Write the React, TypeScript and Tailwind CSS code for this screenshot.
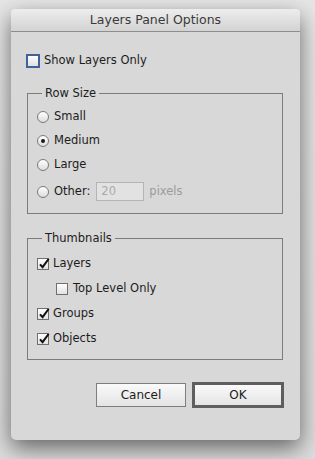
import React from 'react';

const font = { fontFamily: '"DejaVu Sans", "Liberation Sans", sans-serif' };

const Radio = ({ checked }: { checked?: boolean }) => (
    <span className="w-[12px] h-[12px] rounded-full border border-[#7a7a7a] bg-gradient-to-b from-[#ffffff] to-[#dcdcdc] flex items-center justify-center shrink-0">
        {checked && <span className="w-[4px] h-[4px] rounded-full bg-[#1a1a1a]" />}
    </span>
);

const Check = ({ checked }: { checked?: boolean }) => (
    <span className="w-[12px] h-[12px] border border-[#6f6f6f] bg-gradient-to-b from-[#ffffff] to-[#e2e2e2] flex items-center justify-center shrink-0 relative">
        {checked && (
            <svg width="12" height="13" viewBox="0 0 12 13" className="absolute -top-[2px] left-[0px]">
                <path d="M2 7.4 L4.6 10.2 L10.6 2" fill="none" stroke="#111" strokeWidth="2.1" />
            </svg>
        )}
    </span>
);

export default function App() {
    return (
        <div className="w-[315px] h-[459px] bg-gradient-to-b from-[#e6e6e6] to-[#dcdcdc] overflow-hidden pt-[9px] pl-[11px]" style={font}>
            <div className="w-[289px] h-[431px] bg-[#d8d8d8] rounded-t-[4px] rounded-b-[5px] shadow-[0_8px_22px_rgba(0,0,0,0.55)] flex flex-col text-[#1c1c1c]">
                {/* Title bar */}
                <div className="h-[23px] rounded-t-[4px] bg-gradient-to-b from-[#ededed] to-[#d3d3d3] border-b border-[#8e8e8e] flex items-center justify-center text-[12.5px] text-[#3a3a3a]">
                    Layers Panel Options
                </div>

                <div className="pl-[15px] pr-[17px] flex flex-col text-[11.5px]">
                    {/* Show Layers Only */}
                    <div className="mt-[21px] h-[16px] flex items-center gap-[4px]">
                        <span className="w-[14px] h-[14px] border-2 border-[#40619a] bg-gradient-to-b from-[#ffffff] to-[#e0e0e0] shrink-0" />
                        <span>Show Layers Only</span>
                    </div>

                    {/* Row Size */}
                    <fieldset className="mt-[17px] ml-[1px] border border-[#7c7c7c] pl-[9px] pt-[8px] pb-[12px] flex flex-col">
                        <legend className="ml-[5px] px-[3px] leading-[15px]">Row Size</legend>
                        <div className="h-[16px] flex items-center gap-[5px]">
                            <Radio />
                            <span>Small</span>
                        </div>
                        <div className="mt-[8px] h-[16px] flex items-center gap-[5px]">
                            <Radio checked />
                            <span>Medium</span>
                        </div>
                        <div className="mt-[8px] h-[16px] flex items-center gap-[5px]">
                            <Radio />
                            <span>Large</span>
                        </div>
                        <div className="mt-[9px] h-[19px] flex items-center gap-[5px]">
                            <Radio />
                            <span>Other:</span>
                            <span className="ml-[1px] w-[48px] h-[19px] border border-[#b4b4b4] bg-[#e2e2e2] text-[#ababab] pl-[4px] flex items-center">20</span>
                            <span className="text-[#9b9b9b]">pixels</span>
                        </div>
                    </fieldset>

                    {/* Thumbnails */}
                    <fieldset className="mt-[17px] ml-[1px] border border-[#7c7c7c] pl-[9px] pt-[10px] pb-[12px] flex flex-col">
                        <legend className="ml-[5px] px-[3px] leading-[15px]">Thumbnails</legend>
                        <div className="h-[16px] flex items-center gap-[4px]">
                            <Check checked />
                            <span>Layers</span>
                        </div>
                        <div className="mt-[9px] ml-[19px] h-[16px] flex items-center gap-[5px]">
                            <Check />
                            <span>Top Level Only</span>
                        </div>
                        <div className="mt-[9px] h-[16px] flex items-center gap-[4px]">
                            <Check checked />
                            <span>Groups</span>
                        </div>
                        <div className="mt-[9px] h-[16px] flex items-center gap-[4px]">
                            <Check checked />
                            <span>Objects</span>
                        </div>
                    </fieldset>

                    {/* Buttons */}
                    <div className="mt-[22px] flex items-center justify-end gap-[6px] mr-[-1px]">
                        <button className="w-[90px] h-[24px] border border-[#7e7e7e] bg-gradient-to-b from-[#fafafa] to-[#e4e4e4] text-[12px] text-[#1c1c1c]">
                            Cancel
                        </button>
                        <button className="w-[92px] h-[26px] border-[3px] border-[#5e5e5e] bg-gradient-to-b from-[#fafafa] to-[#e4e4e4] text-[12px] text-[#1c1c1c]">
                            OK
                        </button>
                    </div>
                </div>
            </div>
        </div>
    );
}
